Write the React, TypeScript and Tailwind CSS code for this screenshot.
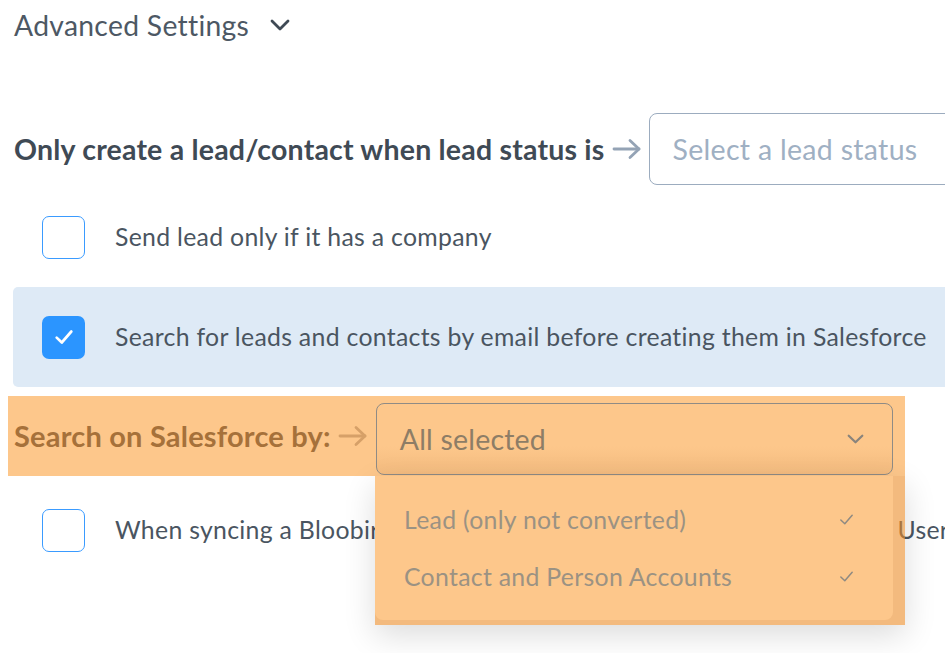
import React from "react";

const Arrow = ({ color }: { color: string }) => (
  <svg width="30" height="22" viewBox="0 0 30 22" fill="none" stroke={color} strokeWidth="2.8" strokeLinecap="round" strokeLinejoin="round">
    <line x1="2" y1="11" x2="27" y2="11" />
    <polyline points="18,2.5 27,11 18,19.5" />
  </svg>
);

const Check = ({ color, size = 18, sw = 2.4 }: { color: string; size?: number; sw?: number }) => (
  <svg width={size} height={size} viewBox="0 0 18 18" fill="none" stroke={color} strokeWidth={sw} strokeLinecap="round" strokeLinejoin="round">
    <polyline points="3,9.5 7.2,13.5 15,4.5" />
  </svg>
);

const Chevron = ({ color, w, h, sw }: { color: string; w: number; h: number; sw: number }) => (
  <svg width={w} height={h} viewBox="0 0 20 12" fill="none" stroke={color} strokeWidth={sw} strokeLinecap="round" strokeLinejoin="round" preserveAspectRatio="none">
    <polyline points="2,2 10,10 18,2" />
  </svg>
);

export default function App() {
  return (
    <div
      className="relative w-[945px] h-[653px] overflow-hidden bg-white text-[#4a5561]"
      style={{ fontFamily: "Lato, 'Open Sans', sans-serif" }}
    >
      {/* header */}
      <div className="h-[50px] flex items-center pl-[14px] gap-[21px]">
        <span className="text-[28.3px] tracking-[0.3px] text-[#4d5864]">Advanced Settings</span>
        <Chevron color="#3f4a55" w={20} h={12} sw={2.8} />
      </div>

      {/* lead status row */}
      <div className="mt-[63px] h-[72px] flex items-center pl-[14px] whitespace-nowrap">
        <span className="text-[28.5px] font-bold text-[#3f4a55] tracking-[0.2px]">Only create a lead/contact when lead status is</span>
        <span className="ml-[7px] mr-[7px] flex items-center">
          <Arrow color="#94a3b5" />
        </span>
        <div className="shrink-0 w-[400px] h-[72px] border border-[#9cacbf] rounded-[8px] flex items-center pl-[23px]">
          <span className="text-[28.5px] text-[#9fb0c3] tracking-[0.3px]">Select a lead status</span>
        </div>
      </div>

      {/* row 1 */}
      <div className="mt-[2px] ml-[13px] h-[100px] flex items-center pl-[29px] whitespace-nowrap">
        <div className="w-[43px] h-[43px] rounded-[7px] border border-[#3a9bff] bg-white shrink-0" />
        <span className="ml-[30px] text-[24.8px] tracking-[0.3px]">Send lead only if it has a company</span>
      </div>

      {/* row 2 highlighted */}
      <div className="ml-[13px] h-[100px] flex items-center pl-[29px] whitespace-nowrap bg-[#deeaf6] rounded-l-[5px] w-[960px]">
        <div className="w-[43px] h-[43px] rounded-[7px] bg-[#2b95ff] shrink-0 flex items-center justify-center">
          <Check color="#ffffff" size={22} sw={2.2} />
        </div>
        <span className="ml-[30px] text-[24.8px] tracking-[0.3px]">Search for leads and contacts by email before creating them in Salesforce</span>
      </div>

      {/* search row (highlighted band) */}
      <div className="relative z-10 mt-[9px] ml-[8px] w-[897px] h-[80px] bg-[#fdc78b] flex items-center pl-[6px] whitespace-nowrap">
        <span className="text-[29px] font-bold text-[#a6713a] tracking-[0.2px]">Search on Salesforce by:</span>
        <span className="ml-[7px] mr-[8px] flex items-center">
          <Arrow color="#d6a068" />
        </span>
        <div className="relative self-end mb-[1px] w-[517px] h-[72px] border border-[#8f8b85] rounded-[8px] flex items-center justify-between pl-[23px] pr-[28px] bg-gradient-to-b from-[#fdc78b] from-60% to-[#f4bc80]">
          <span className="text-[28.5px] text-[#8e7d66] tracking-[0.2px]">All selected</span>
          <Chevron color="#8a847c" w={17} h={10} sw={2.6} />
        </div>

        {/* dropdown menu */}
        <div className="absolute left-[367px] top-[80px] w-[530px] h-[149px] bg-[rgba(235,140,40,0.6)] shadow-[0_10px_30px_rgba(0,0,0,0.14)]">
          <div className="w-[518px] h-[144px] bg-[#fdc78b] rounded-b-[8px] flex flex-col pt-[15px]">
            <div className="h-[57px] flex items-center justify-between pl-[29px] pr-[38px]">
              <span className="text-[24.8px] text-[#9b9283] tracking-[0.3px]">Lead (only not converted)</span>
              <Check color="#8f8a82" size={17} sw={1.6} />
            </div>
            <div className="h-[57px] flex items-center justify-between pl-[29px] pr-[38px]">
              <span className="text-[24.8px] text-[#9b9283] tracking-[0.3px]">Contact and Person Accounts</span>
              <Check color="#8f8a82" size={17} sw={1.6} />
            </div>
          </div>
        </div>
      </div>

      {/* row 3 */}
      <div className="mt-[4px] ml-[13px] h-[100px] flex items-center pl-[29px] whitespace-nowrap">
        <div className="w-[43px] h-[43px] rounded-[7px] border border-[#3a9bff] bg-white shrink-0" />
        <span className="ml-[30px] text-[24.8px] tracking-[0.3px]">When syncing a Bloobirds lead, set the Salesforce owner as the linked User as well</span>
      </div>
    </div>
  );
}
